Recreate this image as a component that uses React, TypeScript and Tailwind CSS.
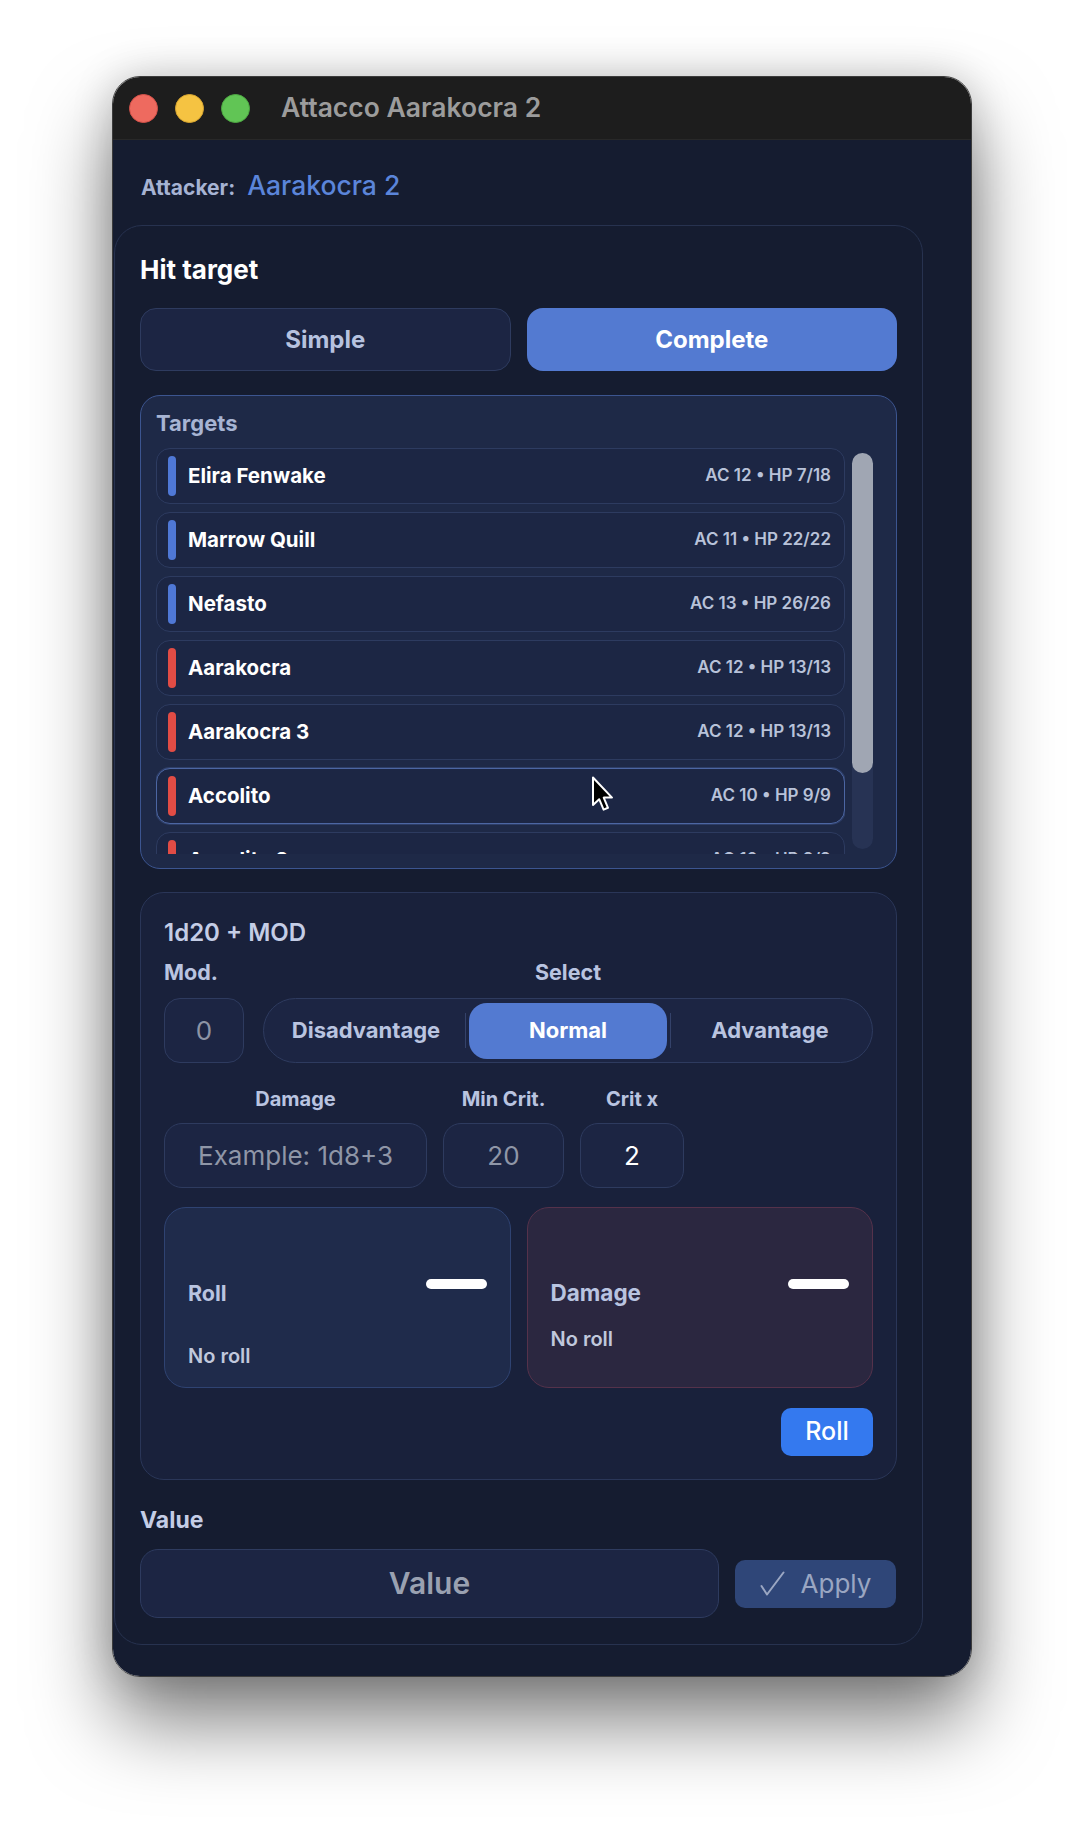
const targets = [
  { name: "Elira Fenwake", stats: "AC 12 • HP 7/18", side: "ally" },
  { name: "Marrow Quill", stats: "AC 11 • HP 22/22", side: "ally" },
  { name: "Nefasto", stats: "AC 13 • HP 26/26", side: "ally" },
  { name: "Aarakocra", stats: "AC 12 • HP 13/13", side: "enemy" },
  { name: "Aarakocra 3", stats: "AC 12 • HP 13/13", side: "enemy" },
  { name: "Accolito", stats: "AC 10 • HP 9/9", side: "enemy", hover: true },
  { name: "Accolito 2", stats: "AC 10 • HP 9/9", side: "enemy" },
];

function TrafficLights() {
  return (
    <div className="flex items-center gap-[17px]">
      <span className="h-[29px] w-[29px] rounded-full border border-[#d5524a] bg-[#ee6a5f]" />
      <span className="h-[29px] w-[29px] rounded-full border border-[#d8a631] bg-[#f5c342]" />
      <span className="h-[29px] w-[29px] rounded-full border border-[#4ea843] bg-[#61c555]" />
    </div>
  );
}

function Cursor() {
  return (
    <svg
      className="pointer-events-none absolute left-[591px] top-[776px]"
      width="24"
      height="38"
      viewBox="0 0 24 38"
      aria-hidden="true"
    >
      <path
        d="M2 1.5 L2 29 L8.2 23.2 L12.6 33.6 L17 31.8 L12.7 21.6 L21 21.6 Z"
        fill="#000"
        stroke="#fff"
        strokeWidth="2"
        strokeLinejoin="round"
      />
    </svg>
  );
}

function TargetRow({ name, stats, side, hover }: { name: string; stats: string; side: string; hover?: boolean }) {
  return (
    <div
      className={
        "flex h-[56px] shrink-0 items-center rounded-[14px] border bg-[#1c2644] pl-[11px] pr-[13px] " +
        (hover ? "border-[#4c66a3] shadow-[0_0_0_1px_rgba(76,102,163,0.35)]" : "border-[#2d3b60]")
      }
    >
      <span className={"h-[40px] w-[8px] rounded-full " + (side === "ally" ? "bg-[#4f78d6]" : "bg-[#e14c45]")} />
      <span className="ml-[12px] text-[20.5px] font-bold text-white">{name}</span>
      <span className="ml-auto text-[17px] font-semibold text-[#b8c2d9]">{stats}</span>
    </div>
  );
}

export default function App() {
  return (
    <div className="relative h-[1826px] w-[1084px] overflow-hidden bg-white pl-[112px] pt-[76px] font-[Inter,sans-serif]">
      <div className="flex h-[1601px] w-[860px] flex-col overflow-hidden rounded-[28px] border border-[#3c3c3c] shadow-[0_45px_80px_rgba(0,0,0,0.5),0_0_40px_rgba(0,0,0,0.18)]">
        {/* title bar */}
        <div className="flex h-[63px] shrink-0 items-center border-b border-[#282828] bg-[#1d1d1d] pl-[16px]">
          <TrafficLights />
          <span className="ml-[31px] text-[26.5px] font-semibold text-[#9c9c9c]">Attacco Aarakocra 2</span>
        </div>

        <div className="flex-1 bg-[#151c30] pt-[29px]">
          <div className="flex items-baseline gap-[12px] pl-[28px] leading-[32px]">
            <span className="text-[21px] font-bold text-[#a6b3d3]">Attacker:</span>
            <span className="text-[26.5px] font-medium text-[#5b85da]">Aarakocra 2</span>
          </div>

          <div className="ml-[1px] mt-[21px] w-[809px] rounded-[28px] border border-[#27324f] px-[25px] pb-[26px] pt-[29px]">
            <h2 className="text-[26px] font-bold leading-[30px] text-white">Hit target</h2>

            <div className="mt-[23px] grid grid-cols-2 gap-[16px]">
              <button className="h-[63px] rounded-[16px] border border-[#2e3b5f] bg-[#1c2543] text-[24px] font-bold text-[#b6c2df]">
                Simple
              </button>
              <button className="h-[63px] rounded-[16px] bg-[#537ad1] text-[24px] font-bold text-white">Complete</button>
            </div>

            {/* targets */}
            <div className="mt-[24px] rounded-[20px] border border-[#3c5590] bg-[#1e2947] pb-[14px] pl-[15px] pr-[23px] pt-[14px]">
              <div className="text-[22px] font-bold leading-[26px] text-[#a7b4d3]">Targets</div>
              <div className="mt-[12px] flex gap-[7px]">
                <div className="flex h-[406px] flex-1 flex-col gap-[8px] overflow-hidden">
                  {targets.map((t) => (
                    <TargetRow key={t.name} {...t} />
                  ))}
                </div>
                <div className="mt-[5px] h-[396px] w-[21px] rounded-full bg-[#273354]">
                  <div className="h-[320px] w-full rounded-full bg-[#a0a6b3]" />
                </div>
              </div>
            </div>

            {/* roll panel */}
            <div className="mt-[23px] rounded-[24px] border border-[#2a3658] bg-[#19213b] px-[23px] pb-[23px] pt-[26px]">
              <div className="text-[24px] font-semibold leading-[28px] text-[#c4cde6]">1d20 + MOD</div>

              <div className="mt-[12px] flex gap-[19px] text-[21.5px] font-bold leading-[26px] text-[#b9c4e0]">
                <span className="w-[80px]">Mod.</span>
                <span className="flex-1 text-center">Select</span>
              </div>

              <div className="mt-[13px] flex gap-[19px]">
                <div className="flex h-[65px] w-[80px] items-center justify-center rounded-[16px] border border-[#2e3b5f] bg-[#1c2543] text-[26px] text-[#8d94a5]">
                  0
                </div>
                <div className="flex h-[65px] flex-1 items-center rounded-full border border-[#2e3b5f] bg-[#1c2543] px-[3px] text-[22px] font-bold">
                  <span className="flex-1 text-center text-[#b9c4e0]">Disadvantage</span>
                  <span className="h-[35px] w-px bg-[#34426a]" />
                  <span className="flex flex-1 px-[3px]">
                    <span className="flex h-[56px] flex-1 items-center justify-center rounded-[18px] bg-[#537ad1] text-white">
                      Normal
                    </span>
                  </span>
                  <span className="h-[35px] w-px bg-[#34426a]" />
                  <span className="flex-1 text-center text-[#b9c4e0]">Advantage</span>
                </div>
              </div>

              <div className="mt-[25px] flex gap-[16px] text-[20px] font-bold leading-[22px] text-[#b9c4e0]">
                <span className="w-[263px] text-center">Damage</span>
                <span className="w-[121px] text-center">Min Crit.</span>
                <span className="w-[104px] text-center">Crit x</span>
              </div>

              <div className="mt-[13px] flex gap-[16px] text-[26px]">
                <div className="flex h-[65px] w-[263px] items-center justify-center rounded-[18px] border border-[#2e3b5f] bg-[#1c2543] text-[#8f96a7]">
                  Example: 1d8+3
                </div>
                <div className="flex h-[65px] w-[121px] items-center justify-center rounded-[18px] border border-[#2e3b5f] bg-[#1c2543] text-[#8f96a7]">
                  20
                </div>
                <div className="flex h-[65px] w-[104px] items-center justify-center rounded-[18px] border border-[#2e3b5f] bg-[#1c2543] text-white">
                  2
                </div>
              </div>

              <div className="mt-[19px] grid grid-cols-2 gap-[16px]">
                <div className="h-[181px] rounded-[22px] border border-[#2f4372] bg-[#1f2b4b] px-[23px] pt-[72px]">
                  <div className="flex items-start justify-between">
                    <span className="text-[21.5px] font-bold leading-[26px] text-[#b9c4e0]">Roll</span>
                    <span className="-mt-px h-[10px] w-[61px] rounded-full bg-white" />
                  </div>
                  <div className="mt-[37px] text-[20px] font-semibold leading-[26px] text-[#c0c8dc]">No roll</div>
                </div>
                <div className="h-[181px] rounded-[22px] border border-[#55324b] bg-[#2b2740] px-[23px] pt-[72px]">
                  <div className="flex items-start justify-between">
                    <span className="text-[22.5px] font-bold leading-[26px] text-[#b9c4e0]">Damage</span>
                    <span className="-mt-px h-[10px] w-[61px] rounded-full bg-white" />
                  </div>
                  <div className="mt-[20px] text-[20px] font-semibold leading-[26px] text-[#c0c8dc]">No roll</div>
                </div>
              </div>

              <div className="mt-[20px] flex justify-end">
                <button className="h-[48px] w-[92px] rounded-[10px] bg-[#3479ef] text-[25px] font-medium text-white">Roll</button>
              </div>
            </div>

            <div className="mt-[27px] text-[23px] font-bold leading-[26px] text-[#c4cde6]">Value</div>
            <div className="mt-[16px] flex items-center gap-[16px]">
              <div className="flex h-[69px] w-[579px] items-center justify-center rounded-[18px] border border-[#2e3b5f] bg-[#1c2543] text-[30px] font-semibold text-[#9aa1b1]">
                Value
              </div>
              <button className="flex h-[48px] w-[161px] items-center justify-center gap-[16px] rounded-[10px] bg-[#2f4678] text-[26px] text-[#9aa6c2]">
                <svg width="25" height="25" viewBox="0 0 25 25" aria-hidden="true">
                  <polyline points="1.5,15 7,23.5 23.5,1.5" fill="none" stroke="#9aa6c2" strokeWidth="2" strokeLinecap="round" strokeLinejoin="round" />
                </svg>
                <span>Apply</span>
              </button>
            </div>
          </div>
        </div>
      </div>
      <Cursor />
    </div>
  );
}
